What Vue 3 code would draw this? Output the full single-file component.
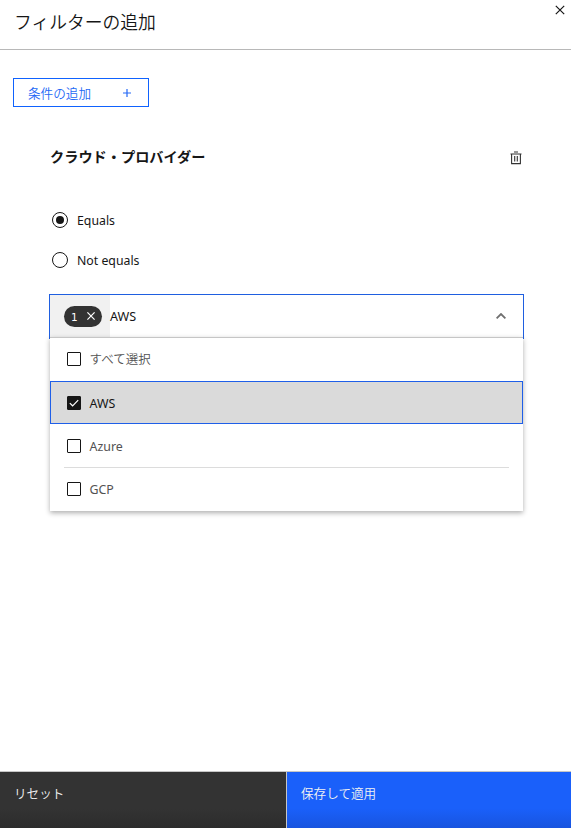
<script setup>
import { ref } from 'vue'

const operator = ref('Equals')
const options = ref([
  { label: 'すべて選択', checked: false },
  { label: 'AWS', checked: true },
  { label: 'Azure', checked: false },
  { label: 'GCP', checked: false },
])
</script>

<template>
  <div class="panel">
    <header class="header">
      <h1>フィルターの追加</h1>
      <button class="icon-button close" aria-label="閉じる">
        <svg width="10" height="10" viewBox="0 0 10 10"><path d="M.8.8 9.2 9.2M9.2.8.8 9.2" /></svg>
      </button>
    </header>

    <main class="content">
      <button class="add">
        <span>条件の追加</span>
        <svg width="8" height="8" viewBox="0 0 8 8"><path d="M4 0v8M0 4h8" /></svg>
      </button>

      <section class="condition">
        <div class="condition-head">
          <h2>クラウド・プロバイダー</h2>
          <button class="icon-button trash-button" aria-label="削除">
            <svg class="trash" width="12" height="14" viewBox="0 0 12 14">
              <path d="M.5 3h11M1.6 3v9.6h8.8V3M4 1h4M4.7 5v5.4M7.3 5v5.4" />
            </svg>
          </button>
        </div>

        <div class="radios">
          <div v-for="name in ['Equals', 'Not equals']" :key="name" class="radio" @click="operator = name">
            <span class="circle" :class="{ on: operator === name }"></span>
            <span class="radio-label">{{ name }}</span>
          </div>
        </div>

        <div class="field">
          <div class="tag-area">
            <span class="tag">
              <span class="count">1</span>
              <svg width="8" height="8" viewBox="0 0 8 8"><path d="M.4.4 7.6 7.6M7.6.4.4 7.6" /></svg>
            </span>
          </div>
          <span class="value">AWS</span>
          <svg class="chevron" width="10" height="6" viewBox="0 0 10 6"><path d="M.6 5.3 5 1l4.4 4.3" /></svg>
        </div>
        <ul class="menu">
          <li v-for="o in options" :key="o.label" :class="{ active: o.checked }" @click="o.checked = !o.checked">
            <div class="option">
              <span class="box" :class="{ checked: o.checked }">
                <svg v-if="o.checked" width="10" height="8" viewBox="0 0 10 8"><path d="M.8 4.1 3.6 6.8 9.2 1.2" /></svg>
              </span>
              <span class="option-label">{{ o.label }}</span>
            </div>
          </li>
        </ul>
      </section>
    </main>

    <footer class="footer">
      <button class="reset">リセット</button>
      <button class="apply">保存して適用</button>
    </footer>
  </div>
</template>

<style>
body {
  background: #fff;
}
</style>

<style scoped>
.panel {
  display: flex;
  flex-direction: column;
  height: 828px;
  overflow: hidden;
  color: #161616;
  font: 12.6px/18px "Noto Sans", "Noto Sans CJK JP", sans-serif;
}
.panel * {
  box-sizing: border-box;
}
button {
  margin: 0;
  padding: 0;
  border: 0;
  background: none;
  color: inherit;
  font: inherit;
  cursor: pointer;
}
svg {
  display: block;
  flex: none;
  fill: none;
  stroke: currentColor;
  stroke-width: 1.2;
}
.header {
  display: flex;
  justify-content: space-between;
  align-items: flex-start;
  height: 50px;
  padding: 5px 6px 0 14px;
  border-bottom: 1px solid #b8b8b8;
}
h1 {
  margin: 3px 0 0;
  font-family: "Noto Sans CJK JP", sans-serif;
  font-size: 17.8px;
  font-weight: 350;
  line-height: 26px;
}
.content {
  flex: 1;
  padding: 28px 48px 0 13px;
}
.add {
  display: flex;
  justify-content: space-between;
  align-items: center;
  width: 136px;
  height: 29px;
  padding: 0 17px 0 14px;
  border: 1px solid #0f62fe;
  color: #2468f5;
  font-family: "Noto Sans CJK JP", sans-serif;
  font-weight: 350;
}
.condition {
  padding: 39px 0 0 36px;
}
.condition-head {
  display: flex;
  justify-content: space-between;
  align-items: flex-start;
  height: 24px;
  padding-right: 1px;
}
h2 {
  margin: 0;
  padding-left: 1px;
  font-size: 14.2px;
  font-weight: 700;
  line-height: 22px;
}
.trash-button {
  padding-top: 5px;
}
.trash {
  stroke-width: 1.1;
  color: #333;
}
.radios {
  display: flex;
  flex-direction: column;
  gap: 22px;
  margin-top: 41px;
  padding-left: 3px;
}
.radio {
  display: flex;
  align-items: center;
  gap: 9px;
  height: 18px;
}
.radio-label {
  padding-top: 2px;
  font-size: 12.3px;
}
.circle {
  display: grid;
  place-items: center;
  width: 16px;
  height: 16px;
  border: 1px solid #161616;
  border-radius: 50%;
}
.circle.on::after {
  content: "";
  width: 8px;
  height: 8px;
  border-radius: 50%;
  background: #161616;
}
.field {
  display: flex;
  align-items: center;
  width: 475px;
  height: 45px;
  margin-top: 25px;
  border: 1px solid #1f5fe0;
  border-bottom: 0;
}
.tag-area {
  display: flex;
  align-items: center;
  width: 60px;
  height: 44px;
  padding: 0 0 1px 14px;
  background: #f1f1f1;
}
.tag {
  display: flex;
  align-items: center;
  justify-content: space-between;
  width: 38px;
  height: 21px;
  padding: 0 7px 0 7px;
  border-radius: 11px;
  background: #333;
  color: #fff;
}
.tag svg {
  margin-bottom: 1px;
}
.count {
  font: 10.5px/20px "DejaVu Sans", sans-serif;
}
.value {
  flex: 1;
}
.chevron {
  margin: 0 17px 2px 0;
  color: #6f6f6f;
  stroke-width: 1.8;
}
.menu {
  position: relative;
  width: 473px;
  margin: -2px 0 0 1px;
  padding: 0;
  border-top: 1px solid #c6c6c6;
  background: #fff;
  box-shadow: 0 2px 5px rgba(0, 0, 0, 0.32);
  color: #525252;
  list-style: none;
}
li {
  height: 43px;
  padding: 0 14px;
  border: 1px solid transparent;
}
li:nth-child(3) {
  height: 44px;
}
li.active {
  border-color: #1f5fe8;
  background: #dadada;
  color: #161616;
}
.option {
  display: flex;
  align-items: center;
  gap: 8.5px;
  height: 40px;
  padding: 0 2px;
}
.option-label {
  padding-top: 2px;
  font-size: 12.4px;
}
li:first-child .option-label {
  padding: 0;
  font-family: "Noto Sans CJK JP", sans-serif;
  font-size: 12.5px;
  font-weight: 350;
}
li.active .option {
  height: 42px;
}
li:nth-child(3) .option {
  height: 43px;
  margin: 0 -1px;
  padding: 0 3px;
  border-bottom: 1px solid #dcdcdc;
}
.box {
  display: grid;
  place-items: center;
  width: 14px;
  height: 14px;
  border: 1px solid #161616;
  border-radius: 1px;
}
.box.checked {
  background: #161616;
  color: #fff;
}
.footer {
  display: flex;
  height: 57px;
  border-top: 1px solid #c6c6c6;
  color: #f2f2f2;
}
.footer button {
  display: flex;
  align-items: flex-start;
  padding: 12px 14px 0;
  font-family: "Noto Sans CJK JP", sans-serif;
  font-weight: 350;
  text-align: left;
}
.footer .reset {
  width: 287px;
  border-right: 1px solid #c6c6c6;
  background: linear-gradient(#333 65%, #2c2c2c);
}
.footer .apply {
  flex: 1;
  background: linear-gradient(#1a60fa 65%, #1854df);
}
</style>
